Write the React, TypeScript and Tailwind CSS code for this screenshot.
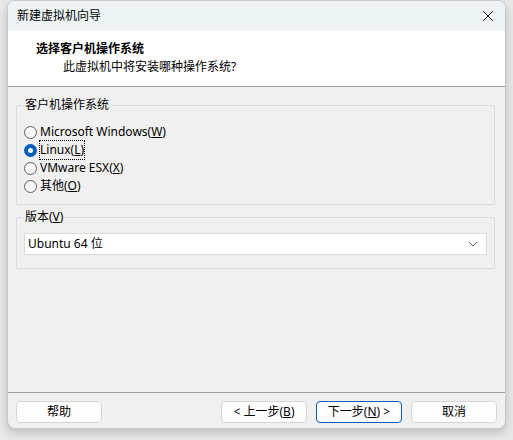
import React from 'react';

const FONT = '"Segoe UI", "Noto Sans", "Noto Sans CJK SC", sans-serif';

type Option = { label: string; key: string };

const osOptions: Option[] = [
  { label: 'Microsoft Windows(', key: 'W' },
  { label: 'Linux(', key: 'L' },
  { label: 'VMware ESX(', key: 'X' },
  { label: '其他(', key: 'O' },
];

function Radio({ checked }: { checked: boolean }) {
  return checked ? (
    <span className="flex h-[13px] w-[13px] items-center justify-center rounded-full bg-[#005fb8]">
      <span className="h-[5px] w-[5px] rounded-full bg-white" />
    </span>
  ) : (
    <span className="h-[13px] w-[13px] rounded-full border border-[#5f5f5f] bg-[#f7f7f7]" />
  );
}

function Button({ children, primary }: { children: React.ReactNode; primary?: boolean }) {
  return (
    <button
      className={
        primary
          ? 'flex h-[22px] w-[86px] items-center justify-center rounded-[4px] border border-[#005fb8] bg-white text-[12px] text-black'
          : 'flex h-[22px] w-[86px] items-center justify-center rounded-[4px] border border-[#d6d6d6] bg-[#fdfdfd] text-[12px] text-black'
      }
    >
      {children}
    </button>
  );
}

export default function App() {
  const [os, setOs] = React.useState(1);

  return (
    <div className="h-[440px] w-[513px] bg-[#e8e8e8] pl-[7px]" style={{ fontFamily: FONT }}>
      <div className="flex h-[429px] w-[499px] flex-col overflow-hidden rounded-t-[8px] rounded-b-[8px] border border-[#c8c8c8] bg-[#f0f0f0] shadow-[0_4px_10px_rgba(0,0,0,0.18)]">
        {/* title bar */}
        <div className="flex h-[30px] shrink-0 items-center justify-between bg-[#eef4f6] pl-[9px] pr-[10px]">
          <span className="text-[12px] text-black">新建虚拟机向导</span>
          <svg width="12" height="12" viewBox="0 0 12 12" className="mr-[1px]">
            <path d="M1 1 L11 11 M11 1 L1 11" stroke="#1a1a1a" strokeWidth="1" />
          </svg>
        </div>

        {/* header */}
        <div className="flex h-[56px] shrink-0 flex-col border-b border-[#a0a0a0] bg-white pl-[28px] pt-[9px]">
          <span className="text-[12px] font-bold leading-[18px] text-black">选择客户机操作系统</span>
          <span className="pl-[27px] text-[12px] leading-[18px] text-black">此虚拟机中将安装哪种操作系统?</span>
        </div>

        {/* body */}
        <div className="flex flex-1 flex-col px-[8px] pt-[11px]">
          <fieldset className="mr-[2px] h-[107px] rounded-[2px] border border-[#dcdcdc] px-[7px] pt-[4px]">
            <legend className="px-[1px] text-[12px] leading-[14px] text-black">客户机操作系统</legend>
            <div className="flex flex-col pt-[7px]">
              {osOptions.map((o, i) => (
                <label
                  key={o.key}
                  className="flex h-[18px] cursor-default items-center gap-[3px] text-[12px] text-black"
                  onClick={() => setOs(i)}
                >
                  <Radio checked={os === i} />
                  <span className={os === i ? 'outline outline-1 outline-dotted outline-black' : ''}>
                    {o.label}
                    <span className="underline">{o.key}</span>)
                  </span>
                </label>
              ))}
            </div>
          </fieldset>

          <fieldset className="mr-[2px] mt-[5px] h-[59px] rounded-[2px] border border-[#dcdcdc] px-[7px]">
            <legend className="px-[1px] text-[12px] leading-[14px] text-black">
              版本(<span className="underline">V</span>)
            </legend>
            <div className="mt-[9px] flex h-[22px] items-center justify-between border border-[#d9d9d9] bg-white pl-[3px] pr-[8px] text-[12px] text-black">
              <span>Ubuntu 64 位</span>
              <svg width="10" height="6" viewBox="0 0 10 6">
                <path d="M1 1 L5 5 L9 1" stroke="#606060" strokeWidth="1" fill="none" />
              </svg>
            </div>
          </fieldset>
        </div>

        {/* footer */}
        <div className="flex h-[36px] shrink-0 items-start justify-between border-t border-[#a0a0a0] px-[8px] pt-[8px]">
          <Button>帮助</Button>
          <div className="flex gap-[9px]">
            <Button>
              &lt; 上一步(<span className="underline">B</span>)
            </Button>
            <Button primary>
              下一步(<span className="underline">N</span>) &gt;
            </Button>
            <Button>取消</Button>
          </div>
        </div>
      </div>
    </div>
  );
}
